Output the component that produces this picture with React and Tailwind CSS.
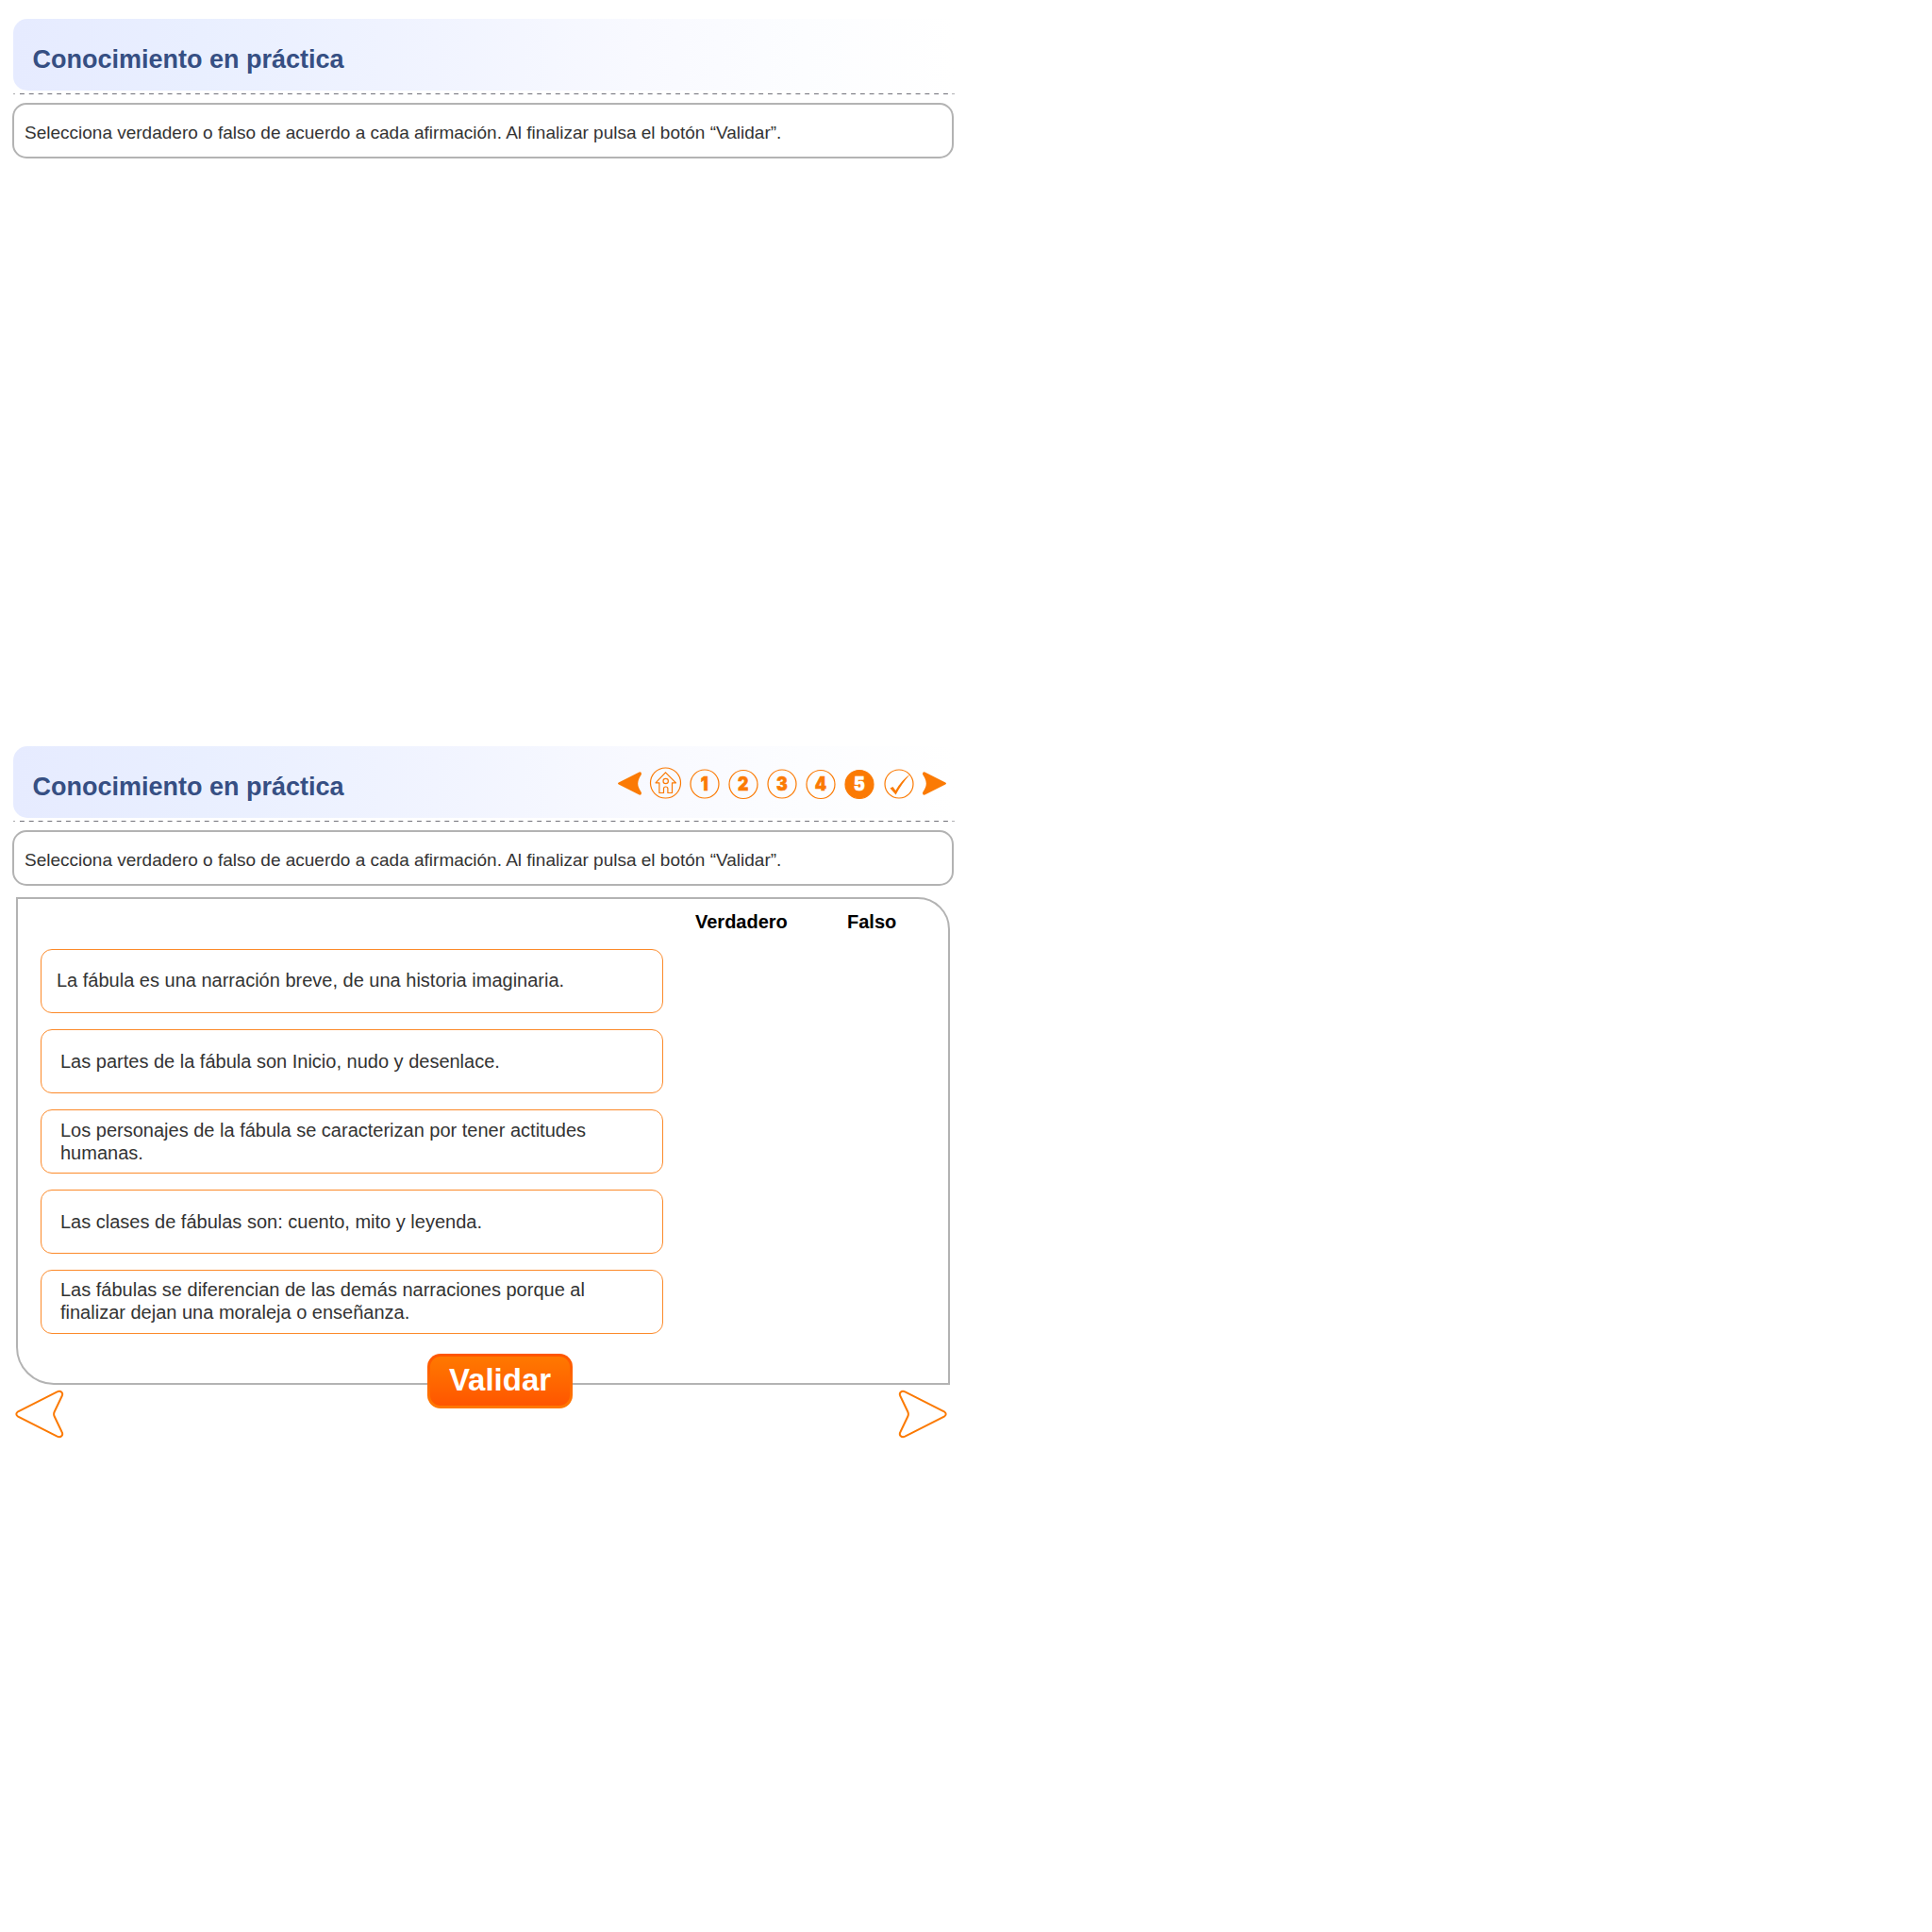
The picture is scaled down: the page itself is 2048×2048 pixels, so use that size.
const ORANGE = "#fb7a04";

function TitleBar({ children }) {
  return (
    <>
      <header className="ml-[14px] flex h-[76px] w-[998px] items-center justify-between rounded-l-[15px] bg-[linear-gradient(90deg,#e6ebff,#e9efff_20%,#f1f4ff_45%,#f8f9ff_66%,#fcfdff_84%,#fff)]">
        <h1 className="ml-[20.5px] mt-[11px] text-[27px] leading-[31px] font-bold whitespace-nowrap text-[#364f83]">
          Conocimiento en práctica
        </h1>
        {children}
      </header>
      <svg className="mt-[3px] ml-[14px] block" width="998" height="1">
        <path d="M0 .5H2" stroke="#a9a9ad" />
        <path d="M7 .5H992" stroke="#72727a" strokeDasharray="4.9 4.89" />
        <path d="M995 .5H998" stroke="#b0b0b4" />
      </svg>
    </>
  );
}

function Instruction() {
  return (
    <div className="mt-[9px] ml-[13px] flex h-[59px] w-[998px] items-center rounded-[15px] border-2 border-[#b3b3b3] pl-[11px]">
      <p className="mt-[5px] text-[19px] leading-[22px] whitespace-nowrap text-[#333]">
        Selecciona verdadero o falso de acuerdo a cada afirmación. Al finalizar pulsa el botón “Validar”.
      </p>
    </div>
  );
}

function SmallArrow({ flip }) {
  return (
    <svg width="25" height="25" viewBox="0 0 25 25" className={flip ? "-scale-x-100" : ""}>
      <path
        d="M.8 11.4 L22.6.4 Q25.4-.2 24.9 3 Q21.2 8.500 21.2 12.500 Q21.2 16.500 24.9 22 Q25.400 25.200 22.600 24.600 L.8 13.600 Q-.8 12.500 .8 11.400Z"
        fill={ORANGE}
      />
    </svg>
  );
}

function Digit({ n, active, dy = 0 }) {
  return (
    <svg width="32" height="34" viewBox="0 0 32 34">
      <circle cx="16" cy={17 + dy} r="15" fill={active ? ORANGE : "none"} stroke={ORANGE} strokeWidth="1.2" />
      <text
        transform="translate(15.8 24.3) scale(.88 1)"
        textAnchor="middle"
        fontSize="20"
        fontWeight="900"
        fontFamily="Inter, sans-serif"
        fill={active ? "#fff" : ORANGE}
        stroke={active ? "#fff" : ORANGE}
        strokeWidth=".6"
      >
        {n}
      </text>
    </svg>
  );
}

function Nav() {
  return (
    <nav className="mr-[9px] mt-[3px] flex items-center">
      <SmallArrow />
      <svg className="ml-[9px] overflow-visible" width="34" height="34" viewBox="0 0 34 34" fill="none" stroke={ORANGE} strokeWidth="1.2">
        <circle cx="16.500" cy="16" r="16" />
        <path
          d="M6 15.800 L16.500 4.800 L27.500 15.800 H23.500 V26.500 H18.900 V22 Q18.900 20 16.700 20 Q14.500 20 14.500 22 V26.500 H9.900 V15.800Z"
          strokeLinejoin="round"
        />
        <circle cx="16.700" cy="14" r="2.700" />
      </svg>
      <div className="ml-[8px] flex gap-[9px]">
        <Digit n="1" />
        <Digit n="2" dy={0.5} />
        <Digit n="3" />
        <Digit n="4" dy={0.5} />
        <Digit n="5" dy={0.5} active />
        <svg className="ml-px" width="32" height="34" viewBox="0 0 32 34">
          <circle cx="16" cy="17" r="15" fill="none" stroke={ORANGE} strokeWidth="1.2" />
          <path d="M6.500 21.500 L9.500 20 L12.400 24 Q18 13.500 28 6.500 Q18.500 17 12.600 28.500Z" fill={ORANGE} />
        </svg>
      </div>
      <div className="ml-[9px]">
        <SmallArrow flip />
      </div>
    </nav>
  );
}

function BigArrow({ flip }) {
  return (
    <svg width="52" height="52" viewBox="0 0 52 52" className={flip ? "-scale-x-100" : ""}>
      <path
        d="M3.200 23.300 L44.600 2.300 C48.500.6 51.400 3.500 49.600 7 L41.700 23.500 Q40.500 26 41.700 28.500 L49.600 45 C51.400 48.500 48.500 51.400 44.600 49.700 L3.200 28.700 Q-.6 26 3.200 23.300Z"
        fill="white"
        stroke={ORANGE}
        strokeWidth="2"
      />
    </svg>
  );
}

function Statement({ children, className = "pl-[20px]" }) {
  return (
    <div
      className={`${className} flex h-[68px] w-[660px] items-center rounded-[12px] border border-[#fc8a2a] bg-white`}
    >
      <p className="w-[580px] text-[20px] leading-[24px] text-[#333]">{children}</p>
    </div>
  );
}

export default function App() {
  return (
    <main className="h-[2048px] w-[2048px] bg-white font-['Liberation_Sans',Arial,sans-serif]">
      <section className="h-[771px] w-[1024px] pt-[20px]">
        <TitleBar />
        <Instruction />
      </section>
      <section className="w-[1024px] pt-[20px]">
        <TitleBar>
          <Nav />
        </TitleBar>
        <Instruction />
        <div className="relative mt-[12px] ml-[17px] h-[517px] w-[990px] rounded-tr-[34px] rounded-bl-[40px] border-2 border-[#b3b3b3]">
          <div className="flex h-[53px] pt-[13px] text-[20px] leading-[23px] font-bold text-black">
            <span className="ml-[718px] w-[161px]">Verdadero</span>
            <span>Falso</span>
          </div>
          <div className="ml-[24px] flex flex-col gap-[17px]">
            <Statement className="pb-[2px] pl-[16px]">La fábula es una narración breve, de una historia imaginaria.</Statement>
            <Statement>Las partes de la fábula son Inicio, nudo y desenlace.</Statement>
            <Statement>Los personajes de la fábula se caracterizan por tener actitudes humanas.</Statement>
            <Statement>Las clases de fábulas son: cuento, mito y leyenda.</Statement>
            <Statement className="pb-[2px] pl-[20px]">
              Las fábulas se diferencian de las demás narraciones porque al finalizar dejan una moraleja o enseñanza.
            </Statement>
          </div>
          <button className="absolute top-[482px] left-[434px] flex h-[58px] w-[154px] rounded-[14px] bg-linear-to-b from-[#ff5500] to-[#ff7800] p-[3px]">
            <span className="flex h-full w-full items-center justify-center rounded-[11px] bg-linear-to-b from-[#ff7800] to-[#ff5500] pb-[3px] text-[33px] leading-[38px] font-bold text-white">
              Validar
            </span>
          </button>
        </div>
        <div className="mt-[5px] ml-[16px] flex w-[988px] justify-between">
          <BigArrow />
          <BigArrow flip />
        </div>
      </section>
    </main>
  );
}
